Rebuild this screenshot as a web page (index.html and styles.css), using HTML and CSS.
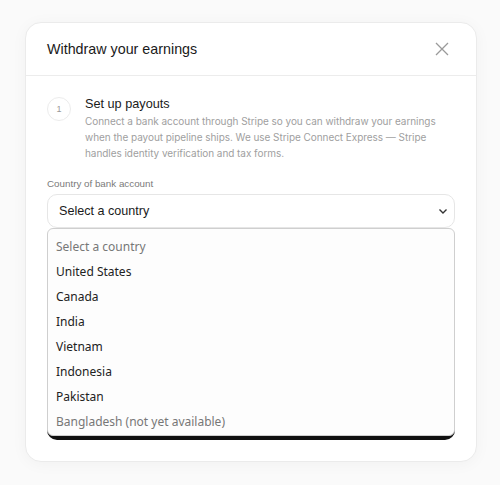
FILE: index.html
```html
<!DOCTYPE html>
<html>
<head>
<meta charset="utf-8">
<link rel="stylesheet" href="styles.css">
</head>
<body>
<div class="page">
  <div class="card">
    <div class="header">
      <h2 class="title">Withdraw your earnings</h2>
      <svg class="close" width="14" height="14" viewBox="0 0 14 14"><path d="M1 1L13 13M13 1L1 13" stroke="#9a9a9a" stroke-width="1.3" fill="none"/></svg>
    </div>
    <div class="body">
      <div class="step">
        <div class="num">1</div>
        <div class="step-text">
          <div class="step-title">Set up payouts</div>
          <p class="desc">Connect a bank account through Stripe so you can withdraw your earnings when the payout pipeline ships. We use Stripe Connect Express — Stripe handles identity verification and tax forms.</p>
        </div>
      </div>
      <div class="field">
        <div class="label">Country of bank account</div>
        <div class="select-wrap">
          <div class="select">
            <span>Select a country</span>
            <svg width="10" height="7" viewBox="0 0 10 7"><path d="M1.5 1.5L5 5L8.5 1.5" stroke="#333" stroke-width="1.4" fill="none"/></svg>
          </div>
          <div class="menu">
            <div class="opt muted">Select a country</div>
            <div class="opt">United States</div>
            <div class="opt">Canada</div>
            <div class="opt">India</div>
            <div class="opt">Vietnam</div>
            <div class="opt">Indonesia</div>
            <div class="opt">Pakistan</div>
            <div class="opt muted">Bangladesh (not yet available)</div>
          </div>
        </div>
      </div>
      <div class="hidden-box"></div>
      <div class="cta"></div>
    </div>
  </div>
</div>
</body>
</html>
```
FILE: styles.css
```css
* { box-sizing: border-box; }
html, body { margin: 0; padding: 0; }
body {
  background: #fafafa;
  font-family: "Liberation Sans", Arial, sans-serif;
  width: 500px;
  height: 485px;
  overflow: hidden;
}
.page {
  padding: 22px 23px 0 25px;
}
.card {
  width: 452px;
  height: 440px;
  background: #fff;
  border: 1px solid #ebebeb;
  border-radius: 16px;
  box-shadow: 0 2px 16px rgba(0,0,0,0.04);
  overflow: hidden;
}
.header {
  height: 53px;
  border-bottom: 1px solid #ececec;
  display: flex;
  align-items: center;
  justify-content: space-between;
  padding: 0 27px 0 21px;
}
.title {
  margin: 0;
  font-size: 14.3px;
  font-weight: 400;
  color: #1a1a1a;
}
.close { display: block; }
.body {
  padding: 21px 21px 0 21px;
}
.step {
  display: flex;
  gap: 14px;
}
.num {
  flex: none;
  width: 24px;
  height: 24px;
  border: 1px solid #ececec;
  border-radius: 50%;
  display: flex;
  align-items: center;
  justify-content: center;
  font-size: 9px;
  color: #999;
}
.step-title {
  font-size: 12.7px;
  color: #1a1a1a;
  line-height: 16px;
  margin-top: -1px;
}
.desc {
  margin: 1px 0 0;
  font-family: Inter, "Liberation Sans", sans-serif;
  font-size: 10px;
  line-height: 16px;
  color: #a0a0a0;
  letter-spacing: -0.05px;
}
.field { margin-top: 17px; }
.label {
  font-size: 9.8px;
  color: #7a7a7a;
  line-height: 12px;
  margin-bottom: 4px;
}
.select-wrap { position: relative; }
.select {
  height: 34px;
  border: 1px solid #e6e6e6;
  border-radius: 10px;
  display: flex;
  align-items: center;
  justify-content: space-between;
  padding: 0 6px 0 11px;
  font-size: 12.6px;
  color: #1a1a1a;
}
.menu {
  position: absolute;
  left: 0;
  top: 34px;
  width: 408px;
  height: 208px;
  background: #fdfdfd;
  border: 1px solid #cfcfcf;
  border-radius: 6px;
  padding-top: 5px;
  z-index: 5;
  font-family: "Noto Sans", "Open Sans", sans-serif;
}
.opt {
  height: 25px;
  line-height: 25px;
  padding-left: 8px;
  font-size: 12px;
  color: #222;
}
.opt.muted { color: #777; }
.hidden-box {
  margin-top: 24px;
  height: 120px;
  border: 1px solid #e0e0e0;
  border-radius: 10px;
}
.cta {
  width: 100%;
  margin-top: 28px;
  height: 40px;
  border-radius: 10px;
  background: #111;
}
```
